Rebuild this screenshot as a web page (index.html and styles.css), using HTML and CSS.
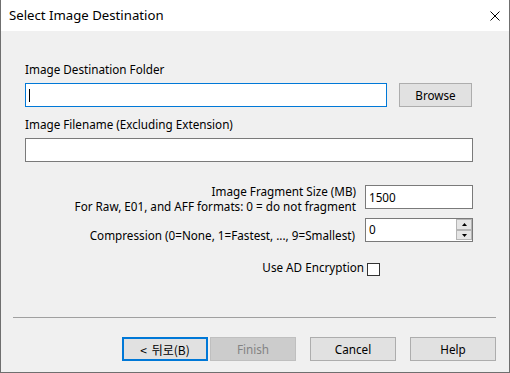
FILE: index.html
```html
<!DOCTYPE html>
<html>
<head>
<meta charset="utf-8">
<link rel="stylesheet" href="styles.css">
</head>
<body>
<div class="window">
  <div class="titlebar">
    <span class="title">Select Image Destination</span>
    <svg class="close" width="10" height="10" viewBox="0 0 10 10"><path d="M0.5 0.5 L9.5 9.5 M9.5 0.5 L0.5 9.5" stroke="#000" stroke-width="1" fill="none"/></svg>
  </div>
  <div class="content">
    <div class="label">Image Destination Folder</div>
    <div class="row">
      <div class="field field-focus"><span class="caret"></span></div>
      <div class="btn btn-browse">Browse</div>
    </div>
    <div class="label">Image Filename (Excluding Extension)</div>
    <div class="field field-wide"></div>
    <div class="opt opt-fragment">
      <div class="opt-label opt-label-frag">Image Fragment Size (MB)<br>For Raw, E01, and AFF formats: 0 = do not fragment</div>
      <div class="field field-small">1500</div>
    </div>
    <div class="opt opt-compress">
      <div class="opt-label opt-label-low">Compression (0=None, 1=Fastest, ..., 9=Smallest)</div>
      <div class="field field-small field-spin">
        <span>0</span>
        <div class="spin">
          <div class="spin-btn"><svg width="5" height="3" viewBox="0 0 5 3"><path d="M2.5 0 L5 3 L0 3 Z" fill="#000"/></svg></div>
          <div class="spin-btn"><svg width="5" height="3" viewBox="0 0 5 3"><path d="M0 0 L5 0 L2.5 3 Z" fill="#000"/></svg></div>
        </div>
      </div>
    </div>
    <div class="opt opt-check">
      <span class="check-label">Use AD Encryption</span>
      <span class="checkbox"></span>
    </div>
  </div>
  <div class="footer">
    <div class="sep"></div>
    <div class="buttons">
      <div class="btn btn-foot btn-default">&lt; 뒤로(B)</div>
      <div class="btn btn-foot btn-disabled">Finish</div>
      <div class="btn btn-foot btn-gap">Cancel</div>
      <div class="btn btn-foot btn-gap">Help</div>
    </div>
  </div>
</div>
</body>
</html>
```
FILE: styles.css
```css
* { box-sizing: border-box; }
html, body { margin: 0; padding: 0; background: #f0f0f0; }
body { font-family: "Noto Sans", "Noto Sans CJK KR", sans-serif; font-size: 11.7px; line-height: 15px; color: #000; }

.window {
  width: 510px;
  height: 373px;
  background: #f0f0f0;
  border-left: 1px solid #6f6f6f;
  border-right: 1px solid #6f6f6f;
  border-bottom: 1px solid #6f6f6f;
}

.titlebar {
  height: 31px;
  background: #fff;
  display: flex;
  align-items: center;
  justify-content: space-between;
  padding: 0 9px 0 8px;
}
.title { font-size: 13.2px; line-height: 18px; margin-top: -1px; }
.close { display: block; margin-top: 1px; }

.content { padding: 31px 36px 0 24px; }

.label { height: 15px; }
.row { display: flex; margin-top: 6px; margin-bottom: 10px; }

.field {
  height: 24px;
  background: #fff;
  border: 1px solid #7a7a7a;
  padding-left: 3px;
  display: flex;
  align-items: center;
}
.field-focus { width: 362px; border-color: #0078d7; }
.caret { width: 1px; height: 13px; background: #000; }
.field-wide { width: 448px; margin-top: 6px; }
.field-small { width: 108px; }

.btn {
  display: flex;
  align-items: center;
  justify-content: center;
  background: #e1e1e1;
  border: 1px solid #adadad;
  height: 24px;
}
.btn-browse { width: 73px; margin-left: 12px; }

.opt { display: flex; justify-content: flex-end; align-items: flex-start; }
.opt-label { text-align: right; margin-right: 9px; }
.opt-label-frag { margin-top: 1px; }
.opt-fragment { margin-top: 21px; }
.opt-fragment .field { margin-top: 2px; }
.opt-compress { margin-top: 4px; }
.opt-label-low { margin-top: 10px; margin-right: 10px; }

.field-spin { justify-content: space-between; padding-right: 0; align-items: flex-start; padding-top: 3px; }
.spin { display: flex; flex-direction: column; margin-top: -3px; }
.spin-btn {
  width: 16px;
  height: 11px;
  background: #e5e5e5;
  border: 1px solid #b5b5b5;
  display: flex;
  align-items: center;
  justify-content: center;
}
.spin-btn + .spin-btn { height: 10px; }

.opt-check { margin-top: 17px; padding-right: 93px; }
.check-label { margin-right: 3px; }
.checkbox { width: 13px; height: 13px; border: 1px solid #333; background: #fff; margin-top: 3px; }

.footer { padding: 0 13px 0 12px; margin-top: 41px; }
.sep { height: 1px; background: #a0a0a0; }
.buttons { display: flex; justify-content: flex-end; margin-top: 19px; }
.btn-foot { width: 86px; }
.btn-default { border: 2px solid #0078d7; font-family: "Noto Sans CJK KR", "Noto Sans", sans-serif; font-size: 12px; word-spacing: 2px; }
.btn-disabled { margin-left: 2px; background: #cccccc; border-color: #bfbfbf; color: #838383; }
.btn-gap { margin-left: 14px; }
```
